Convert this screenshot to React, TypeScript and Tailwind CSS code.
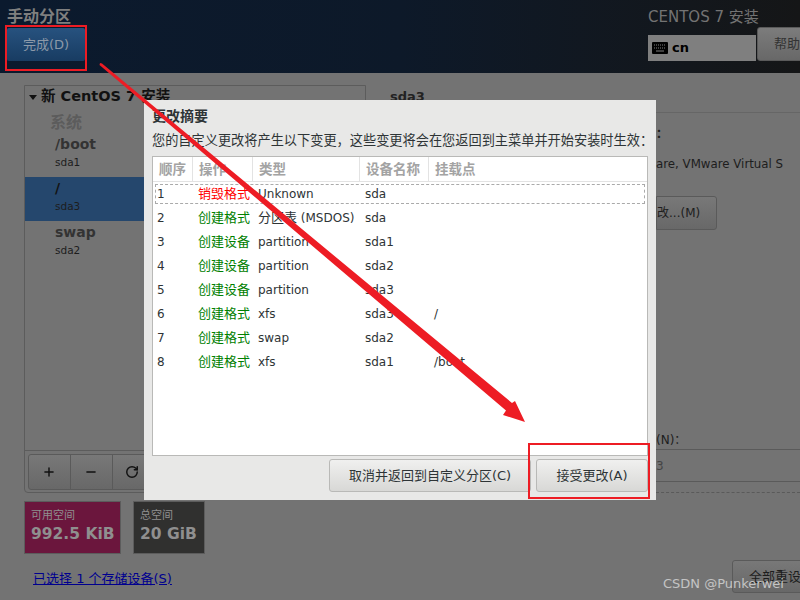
import React from 'react';
import { Plus, Minus, RotateCw } from 'lucide-react';

const FONT = "font-['DejaVu_Sans','Noto_Sans_CJK_SC',sans-serif]";

const changes = [
  { id: 1, action: '销毁格式', type: 'Unknown', device: 'sda', mount: '', destroy: true },
  { id: 2, action: '创建格式', cjk: '分区表', type: ' (MSDOS)', device: 'sda', mount: '' },
  { id: 3, action: '创建设备', type: 'partition', device: 'sda1', mount: '' },
  { id: 4, action: '创建设备', type: 'partition', device: 'sda2', mount: '' },
  { id: 5, action: '创建设备', type: 'partition', device: 'sda3', mount: '' },
  { id: 6, action: '创建格式', type: 'xfs', device: 'sda3', mount: '/' },
  { id: 7, action: '创建格式', type: 'swap', device: 'sda2', mount: '' },
  { id: 8, action: '创建格式', type: 'xfs', device: 'sda1', mount: '/boot' },
];

const KeyboardIcon = () => (
  <svg width="16" height="12" viewBox="0 0 16 12">
    <rect width="16" height="12" rx="1" fill="#000" />
    <path d="M2 3h12M2 6h12" stroke="#7f7f7f" strokeWidth="1" strokeDasharray="1 1" />
    <path d="M4 9h8" stroke="#7f7f7f" strokeWidth="1" />
  </svg>
);

const Header = () => (
  <header className="h-[73px] flex justify-between bg-gradient-to-r from-[#0b1a2e] via-[#0d1929] to-[#151617] overflow-hidden">
    <div className="pl-[7px] pt-[7px]">
      <div className="text-[16px] leading-[20px] font-bold text-[#7f7f7f]">手动分区</div>
      <div className="mt-[1px] w-[78px] h-[33px] flex items-center justify-center rounded-[2px] bg-gradient-to-b from-[#27527f] to-[#183c62] text-[13px] text-[#8c99a8]">
        完成(D)
      </div>
    </div>
    <div className="w-[152px] shrink-0 pt-[7px]">
      <div className="text-[15px] leading-[20px] text-[#737373] whitespace-nowrap">CENTOS 7 安装</div>
      <div className="flex">
        <div className="w-[108px] shrink-0 h-[26px] mt-[8px] bg-[#7f7f7f] flex items-center pl-[4px] gap-[4px] text-[13px] font-bold text-black">
          <KeyboardIcon />
          cn
        </div>
        <div className="w-[60px] h-[34px] shrink-0 ml-[1px] rounded-[3px] border border-[#5a5a5a] bg-gradient-to-b from-[#7c7c7c] to-[#686868] pl-[16px] flex items-center text-[13px] text-[#333333]">
          帮助
        </div>
      </div>
    </div>
  </header>
);

const PartitionRow = ({ mount, device, active }: { mount: string; device: string; active?: boolean }) => (
  <div className={`h-[44px] pl-[30px] pt-[2px] ${active ? 'bg-[#25476d]' : ''}`}>
    <div className={`text-[14px] leading-[18px] font-bold ${active ? 'text-[#131313]' : 'text-[#333333]'}`}>{mount}</div>
    <div className="mt-[1px] text-[10.5px] leading-[16px] text-[#1d1d1d]">{device}</div>
  </div>
);

const LeftPanel = () => (
  <div className="w-[342px] shrink-0">
    <div className="h-[408px] border border-[#5c5c5c] rounded-b-[4px] flex flex-col">
      <div className="pl-[4px] pt-[1px] h-[21px] flex items-center gap-[4px] text-[14.5px] font-bold text-[#111111] whitespace-nowrap">
        <span className="w-0 h-0 border-x-[4px] border-x-transparent border-t-[5px] border-t-[#111111]" />
        新 CentOS 7 安装
      </div>
      <div className="pl-[25px] pt-[7px] pb-[1px] text-[16px] leading-[18px] font-bold text-[#5c5c5c]">系统</div>
      <div className="flex-1">
        <PartitionRow mount="/boot" device="sda1" />
        <PartitionRow mount="/" device="sda3" active />
        <PartitionRow mount="swap" device="sda2" />
      </div>
      <div className="h-[42px] border-t border-[#5c5c5c] pl-[3px] pt-[3px]">
        <div className="h-[36px] w-[330px] flex rounded-[3px] border border-[#5a5a5a] bg-gradient-to-b from-[#787878] to-[#686868] text-[#111111]">
          <div className="w-[42px] border-r border-[#5a5a5a] flex items-center justify-center pr-[2px]"><Plus size={14} strokeWidth={2.5} /></div>
          <div className="w-[42px] border-r border-[#5a5a5a] flex items-center justify-center pr-[2px]"><Minus size={14} strokeWidth={2.5} /></div>
          <div className="w-[42px] flex items-center justify-center pr-[4px]"><RotateCw size={14} strokeWidth={2.5} /></div>
        </div>
      </div>
    </div>
    <div className="flex gap-[12px] mt-[8px]">
      <div className="w-[97px] h-[53px] border border-[#5c5c5c] bg-[#6b163d] pl-[6px] pt-[6px] text-[#8f8f8f]">
        <div className="text-[11px] leading-[16px]">可用空间</div>
        <div className="text-[15.5px] leading-[20px] font-bold whitespace-nowrap">992.5 KiB</div>
      </div>
      <div className="w-[72px] h-[53px] border border-[#5c5c5c] bg-[#30302f] pl-[6px] pt-[6px] text-[#8f8f8f]">
        <div className="text-[11px] leading-[16px]">总空间</div>
        <div className="text-[15.5px] leading-[20px] font-bold whitespace-nowrap">20 GiB</div>
      </div>
    </div>
    <div className="mt-[16px] pl-[9px] text-[13px] leading-[18px] text-[#00008f] underline whitespace-nowrap">已选择 1 个存储设备(S)</div>
  </div>
);

const RightPanel = () => (
  <div className="flex-1 min-w-0 pl-[24px] text-[#1d1d1d]">
    <div className="h-[28px] pt-[2px] text-[13px] leading-[20px] font-bold text-[#222222] border-b border-[#666666]">sda3</div>
    <div className="pl-[266px] pt-[12px] text-[12px] leading-[18px] font-bold">：</div>
    <div className="pt-[12px] pl-[266px] whitespace-nowrap text-[11.8px] leading-[18px]">are, VMware Virtual S</div>
    <div className="mt-[23px] ml-[266px] w-[61px] h-[34px] rounded-r-[3px] border border-[#5a5a5a] bg-gradient-to-b from-[#787878] to-[#686868] flex items-center text-[12px]">改...(M)</div>
    <div className="pt-[201px] pl-[266px] h-[219px] text-[12px] leading-[18px]">(N)：</div>
    <div className="ml-[266px] h-[33px] border-y border-[#5a5a5a] flex items-center text-[12px] text-[#444444]">3</div>
    <div className="mt-[10px] border-t border-dashed border-[#5a5a5a] ml-[266px]" />
    <div className="mt-[67px] ml-[342px] w-[80px] h-[33px] rounded-[3px] border border-[#5a5a5a] bg-gradient-to-b from-[#787878] to-[#686868] flex items-center pl-[16px] text-[13px] whitespace-nowrap">全部重设</div>
  </div>
);

const th = 'border-r border-[#e3e3e3] pl-[6px] text-left text-[13.5px] font-bold text-[#a3a3a3] shrink-0 leading-[24px]';

const ChangesDialog = () => (
  <div className="absolute left-[144px] top-[100px] w-[512px] h-[400px] bg-[#e8e8e7] px-[8px] pt-[7px] text-[#2e3436]">
    <div className="text-[14px] leading-[18px] font-bold">更改摘要</div>
    <div className="mt-[7px] text-[13.2px] leading-[18px] whitespace-nowrap">您的自定义更改将产生以下变更，这些变更将会在您返回到主菜单并开始安装时生效：</div>
    <div className="mt-[6px] w-[496px] h-[300px] border border-[#b9b9b7] bg-white">
      <div className="flex h-[25px] border-b border-[#e3e3e3]">
        <div className={`${th} w-[40px]`}>顺序</div>
        <div className={`${th} w-[60px]`}>操作</div>
        <div className={`${th} w-[107px]`}>类型</div>
        <div className={`${th} w-[69px]`}>设备名称</div>
        <div className={`${th} border-r-0`}>挂载点</div>
      </div>
      <div className="relative">
        <div className="absolute left-[2px] right-[2px] top-[2px] h-[20px] border border-dashed border-[#aaaaaa]" />
        {changes.map((row) => (
          <div key={row.id} className="flex h-[24px] items-center text-[12px] text-[#2e3436] whitespace-nowrap">
            <div className="w-[40px] pl-[4px]">{row.id}</div>
            <div className={`w-[60px] pl-[5px] text-[13px] ${row.destroy ? 'text-[#ff0000]' : 'text-[#008000]'}`}>{row.action}</div>
            <div className="w-[107px] pl-[5px] whitespace-pre">
              {row.cjk && <span className="text-[13px]">{row.cjk}</span>}
              {row.type}
            </div>
            <div className="w-[69px] pl-[5px]">{row.device}</div>
            <div className="pl-[5px]">{row.mount}</div>
          </div>
        ))}
      </div>
    </div>
    <div className="flex justify-end gap-[5px] mt-[3px]">
      <div className="w-[202px] h-[33px] rounded-[3px] border border-[#b9b9b7] bg-gradient-to-b from-[#f0f0ef] to-[#d8d8d6] flex items-center justify-center text-[13px]">取消并返回到自定义分区(C)</div>
      <div className="w-[112px] h-[33px] rounded-[3px] border border-[#b9b9b7] bg-gradient-to-b from-[#f0f0ef] to-[#d8d8d6] flex items-center justify-center text-[13px]">接受更改(A)</div>
    </div>
  </div>
);

// red marks drawn on top of the screenshot
const Annotations = () => (
  <>
    <div className="absolute left-[5px] top-[25px] w-[82px] h-[46px] border-2 border-[#ed1c24]" />
    <div className="absolute left-[528px] top-[443px] w-[122px] h-[56px] border-2 border-[#ed1c24]" />
    <svg className="absolute left-0 top-0" width="800" height="600">
      <polygon points="100,63 102,63.5 512,403 515,401 525,422 503,415 506,410.5 99.5,65" fill="#ed1c24" />
    </svg>
  </>
);

export default function App() {
  return (
    <div className={`relative w-[800px] h-[600px] overflow-hidden bg-[#737373] ${FONT}`}>
      <Header />
      <div className="flex pl-[24px] pt-[12px] h-[527px]">
        <LeftPanel />
        <RightPanel />
      </div>
      <ChangesDialog />
      <Annotations />
      <div className="absolute left-[663px] top-[575px] text-[13px] leading-[18px] text-[#c4c4c4] whitespace-nowrap">CSDN @Punkerwei</div>
    </div>
  );
}
